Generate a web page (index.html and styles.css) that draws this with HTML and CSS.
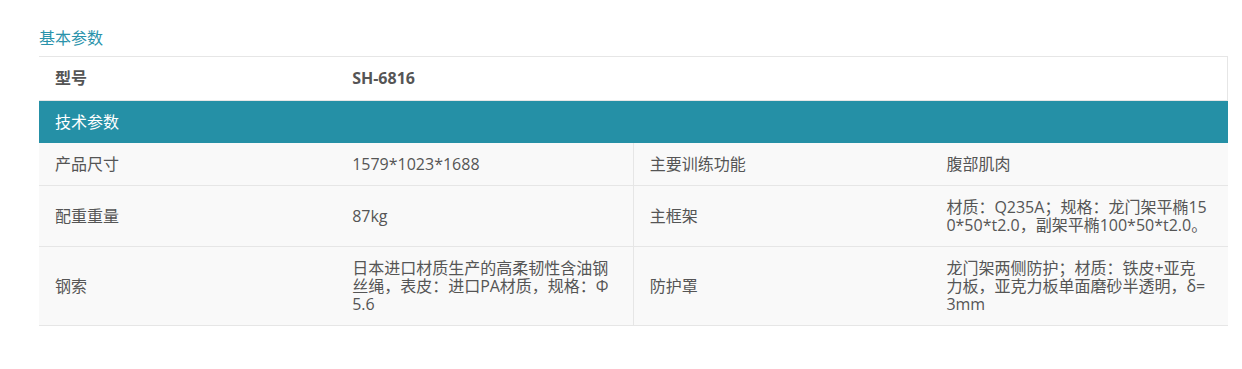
FILE: index.html
```html
<!DOCTYPE html>
<html lang="zh-CN">
<head>
<meta charset="utf-8">
<title>基本参数</title>
<link rel="stylesheet" href="styles.css">
</head>
<body>
<div class="page">
  <h2 class="title">基本参数</h2>
  <table class="spec">
    <colgroup><col><col><col><col></colgroup>
    <tr class="model">
      <th>型号</th>
      <th colspan="3">SH-6816</th>
    </tr>
    <tr class="section">
      <th colspan="4">技术参数</th>
    </tr>
    <tr class="data">
      <td>产品尺寸</td>
      <td>1579*1023*1688</td>
      <td class="divider">主要训练功能</td>
      <td>腹部肌肉</td>
    </tr>
    <tr class="data">
      <td>配重重量</td>
      <td>87kg</td>
      <td class="divider">主框架</td>
      <td>材质：Q235A；规格：龙门架平椭150*50*t2.0，副架平椭100*50*t2.0。</td>
    </tr>
    <tr class="data">
      <td>钢索</td>
      <td>日本进口材质生产的高柔韧性含油钢丝绳，表皮：进口PA材质，规格：Φ5.6</td>
      <td class="divider">防护罩</td>
      <td>龙门架两侧防护；材质：铁皮+亚克力板，亚克力板单面磨砂半透明，δ=3mm</td>
    </tr>
  </table>
</div>
</body>
</html>
```

FILE: styles.css
```css
html, body {
  margin: 0;
  padding: 0;
  background: #ffffff;
}

body {
  font-family: "Open Sans", "Noto Sans CJK SC", sans-serif;
  font-size: 16px;
  color: #555555;
}

.page {
  padding: 28px 14px 0 39px;
}

.title {
  margin: 0 0 8px 0;
  font-size: 16px;
  font-weight: normal;
  line-height: 20px;
  color: #2a93ab;
}

.spec {
  width: 1189px;
  border-collapse: collapse;
  table-layout: fixed;
}

.spec col {
  width: 25%;
}

.spec th,
.spec td {
  padding: 12px 16px;
  line-height: 18px;
  text-align: left;
  vertical-align: middle;
  word-break: break-all;
}

.model th {
  font-weight: bold;
  color: #555555;
  background: #ffffff;
  border-top: 1px solid #e6e6e6;
  border-bottom: 1px solid #e6e6e6;
  line-height: 19px;
}

.model th:last-child {
  border-right: 1px solid #e6e6e6;
}

.section th {
  background: #2590a6;
  color: #ffffff;
  font-weight: normal;
}

.data td {
  background: #f9f9f9;
  border-bottom: 1px solid #e6e6e6;
}

.data td.divider {
  border-left: 1px solid #e6e6e6;
}
```
